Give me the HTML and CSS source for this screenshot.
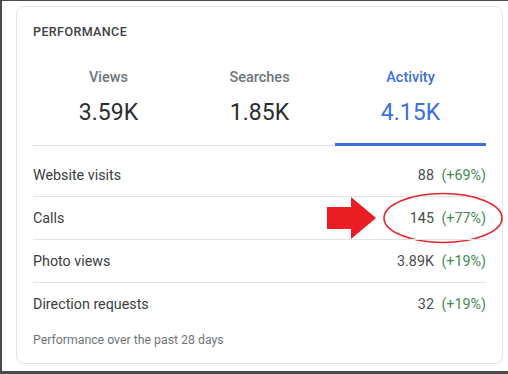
FILE: index.html
```html
<!DOCTYPE html>
<html lang="en">
<head>
    <meta charset="UTF-8">
    <meta name="viewport" content="width=device-width, initial-scale=1.0">
    <title>Performance</title>
    <link rel="stylesheet" href="styles.css">
</head>
<body>
    <div class="frame">
        <div class="card">
            <h2 class="card-title">PERFORMANCE</h2>
            <div class="tabs">
                <div class="tab">
                    <span class="tab-label">Views</span>
                    <span class="tab-value">3.59K</span>
                </div>
                <div class="tab">
                    <span class="tab-label">Searches</span>
                    <span class="tab-value">1.85K</span>
                </div>
                <div class="tab active">
                    <span class="tab-label">Activity</span>
                    <span class="tab-value">4.15K</span>
                </div>
            </div>
            <ul class="rows">
                <li class="row">
                    <span>Website visits</span>
                    <span class="stat">88 <span class="change">(+69%)</span></span>
                </li>
                <li class="row">
                    <span>Calls</span>
                    <span class="stat">145 <span class="change">(+77%)</span></span>
                    <!-- annotation -->
                    <svg class="arrow" width="50" height="42" viewBox="0 0 50 42">
                        <polygon points="0,10 24,10 24,0 49,21 24,42 24,32 0,32" fill="#ea1c24"/>
                    </svg>
                    <svg class="circle" width="122" height="52" viewBox="0 0 122 52">
                        <ellipse cx="61" cy="26" rx="59" ry="24.5" fill="none" stroke="#e5262d" stroke-width="1.6"/>
                    </svg>
                </li>
                <li class="row">
                    <span>Photo views</span>
                    <span class="stat">3.89K <span class="change">(+19%)</span></span>
                </li>
                <li class="row">
                    <span>Direction requests</span>
                    <span class="stat">32 <span class="change">(+19%)</span></span>
                </li>
            </ul>
            <p class="footnote">Performance over the past 28 days</p>
        </div>
    </div>
</body>
</html>
```

FILE: styles.css
```css
body {
    margin: 0;
    background-color: #fff;
    font-family: Roboto, "Liberation Sans", Arial, sans-serif;
    color: #3c4043;
}
.frame {
    box-sizing: border-box;
    height: 374px;
    border-top: 1px solid #4a4a4a;
    border-left: 2px solid #4a4a4a;
    border-bottom: 3px solid #4a4a4a;
    padding: 5px 5px 0 14px;
}
.card {
    box-sizing: border-box;
    width: 487px;
    height: 358px;
    border: 1px solid #e3e3e3;
    border-radius: 8px;
    padding: 0 16px;
}
.card-title {
    margin: 0;
    padding-top: 18px;
    font-size: 12.5px;
    line-height: 14px;
    font-weight: 500;
    letter-spacing: 0.4px;
    color: #3c4043;
}
.tabs {
    display: flex;
    border-bottom: 1px solid #e3e3e3;
    margin-top: 29px;
}
.tab {
    flex: 1;
    display: flex;
    flex-direction: column;
    align-items: center;
    gap: 10px;
    padding-bottom: 15px;
    border-bottom: 3px solid transparent;
    margin-bottom: -1px;
}
.tab-label {
    font-size: 14.5px;
    line-height: 20px;
    font-weight: 500;
    color: #70757a;
}
.tab-value {
    font-size: 23px;
    line-height: 30px;
    color: #2a2d30;
}
.tab.active {
    border-bottom-color: #3b6fe0;
}
.tab.active .tab-label,
.tab.active .tab-value {
    color: #3b6fe0;
}
.rows {
    list-style: none;
    margin: 8px 0 0;
    padding: 0;
}
.row {
    position: relative;
    display: flex;
    justify-content: space-between;
    align-items: center;
    height: 42px;
    font-size: 14.3px;
    color: #3c4043;
}
.row + .row {
    border-top: 1px solid #e3e3e3;
}
.stat {
    color: #4a4d50;
}
.change {
    margin-left: 4px;
    color: #3f8b4f;
}
.footnote {
    margin: 7px 0 0;
    font-size: 12.3px;
    line-height: 16px;
    color: #70757a;
}
.arrow {
    position: absolute;
    left: 294px;
    top: 0;
}
.circle {
    position: absolute;
    left: 349px;
    top: -5px;
}
```
